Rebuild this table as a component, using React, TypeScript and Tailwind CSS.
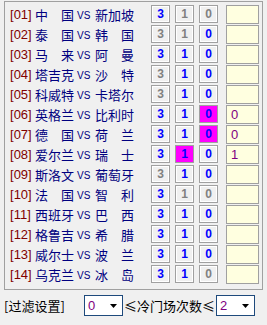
type Pick = { v: string; on: boolean; hot?: boolean };
type Match = { no: string; home: string; away: string; picks: Pick[]; note: string };

const mk = (s: string, hot = -1): Pick[] =>
  ["3", "1", "0"].map((v, i) => ({ v, on: s[i] === "b", hot: i === hot }));

const matches: Match[] = [
  { no: "01", home: "中国", away: "新加坡", picks: mk("bgg"), note: "" },
  { no: "02", home: "泰国", away: "韩国", picks: mk("ggb"), note: "" },
  { no: "03", home: "马来", away: "阿曼", picks: mk("bbb"), note: "" },
  { no: "04", home: "塔吉克", away: "沙特", picks: mk("gbb"), note: "" },
  { no: "05", home: "科威特", away: "卡塔尔", picks: mk("gbb"), note: "" },
  { no: "06", home: "英格兰", away: "比利时", picks: mk("bbb", 2), note: "0" },
  { no: "07", home: "德国", away: "荷兰", picks: mk("bbb", 2), note: "0" },
  { no: "08", home: "爱尔兰", away: "瑞士", picks: mk("bbb", 1), note: "1" },
  { no: "09", home: "斯洛文", away: "葡萄牙", picks: mk("gbb"), note: "" },
  { no: "10", home: "法国", away: "智利", picks: mk("bgg"), note: "" },
  { no: "11", home: "西班牙", away: "巴西", picks: mk("bbb"), note: "" },
  { no: "12", home: "格鲁吉", away: "希腊", picks: mk("bbb"), note: "" },
  { no: "13", home: "威尔士", away: "波兰", picks: mk("bbb"), note: "" },
  { no: "14", home: "乌克兰", away: "冰岛", picks: mk("bbg"), note: "" },
];

const cjk = "font-['Noto_Sans_CJK_SC',sans-serif]";

function Team({ name }: { name: string }) {
  // two-character names are spread over the width of three
  return (
    <div className={`flex w-[39px] justify-between text-[13px] leading-none text-[#000080] ${cjk}`}>
      {name.split("").map((c, i) => (
        <span key={i}>{c}</span>
      ))}
    </div>
  );
}

function PickBox({ p }: { p: Pick }) {
  return (
    <div
      className={`flex h-[18px] w-[19px] items-center justify-center border border-[#a0a0a0] font-['Liberation_Sans',sans-serif] text-[12px] font-bold leading-none ${
        p.hot ? "bg-[#ff00ff]" : "bg-[#f0f0f0] shadow-[inset_1px_1px_0_#ffffff,inset_-1px_-1px_0_#ffffff]"
      } ${p.on ? "text-[#0000ff]" : "text-[#808080]"}`}
    >
      {p.v}
    </div>
  );
}

function Combo({ value }: { value: string }) {
  return (
    <div className="flex h-[21px] w-[39px] items-center border border-[#1e4a7c] bg-white pl-[3px] pr-[5px]">
      <span className="flex-1 font-['Liberation_Sans',sans-serif] text-[13px] leading-none text-[#800080]">{value}</span>
      <svg width="7" height="4" viewBox="0 0 7 4">
        <path d="M0 0h7L3.5 4z" fill="#000" />
      </svg>
    </div>
  );
}

export default function App() {
  return (
    <div className="h-[325px] w-[267px] overflow-hidden bg-[#f0f0f0] pt-px">
      {/* match list */}
      <div className="ml-[4px] h-[289px] w-[259px] border border-[#a0a0a0] pl-[5px] pt-[2px]">
        {matches.map((m) => (
          <div key={m.no} className="flex h-[20px] items-center">
            <span className="w-[25px] font-['Liberation_Sans',sans-serif] text-[13px] leading-none text-[#800000]">
              [{m.no}]
            </span>
            <Team name={m.home} />
            <span className="w-[21px] translate-y-[2px] pl-[3px] font-['Liberation_Sans',sans-serif] text-[10px] leading-none text-[#000080]">
              VS
            </span>
            <Team name={m.away} />
            <div className="ml-[17px] flex items-center gap-[5px]">
              {m.picks.map((p, i) => (
                <PickBox key={i} p={p} />
              ))}
            </div>
            <div className="ml-[8px] flex h-[19px] w-[33px] items-center border border-[#a0a0a0] bg-[#ffffe0] pl-[4px] font-['Liberation_Sans',sans-serif] text-[13px] leading-none text-[#800080]">
              {m.note}
            </div>
          </div>
        ))}
      </div>

      {/* filter settings */}
      <div className={`mt-[5px] flex items-center pl-[4px] text-[13px] leading-none text-black ${cjk}`}>
        <span className="w-[80px]">[过滤设置]</span>
        <Combo value="0" />
        <span className="px-[1px]">≤冷门场次数≤</span>
        <Combo value="2" />
      </div>
    </div>
  );
}
